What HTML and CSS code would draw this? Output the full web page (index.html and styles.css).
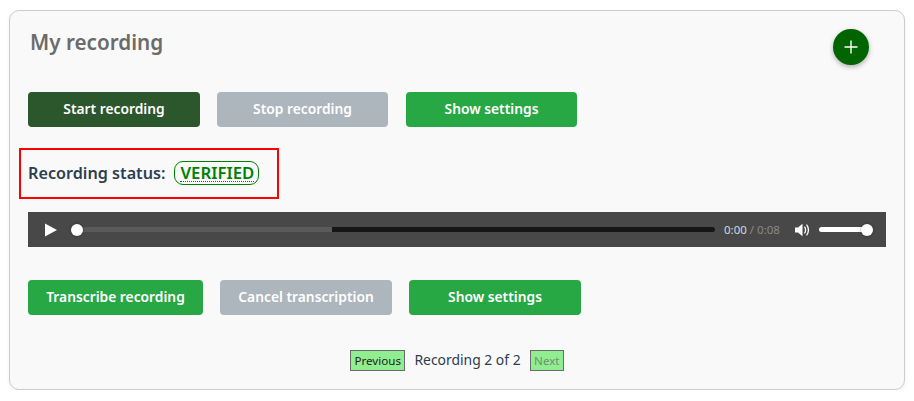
FILE: index.html
```html
<!DOCTYPE html>
<html lang="en">
<head>
<meta charset="utf-8">
<title>My recording</title>
<link rel="stylesheet" href="styles.css">
</head>
<body>
<main class="card">
  <header class="card-head">
    <h1 class="title">My recording</h1>
    <button class="fab" aria-label="Add"><svg width="14" height="14" viewBox="0 0 14 14"><path d="M7 .5v13M.5 7h13" stroke="#fff" stroke-width="1.4" fill="none"/></svg></button>
  </header>
  <div class="btn-row row-one">
    <button class="btn dark w-172">Start recording</button>
    <button class="btn grey w-171">Stop recording</button>
    <button class="btn green w-171">Show settings</button>
  </div>
  <div class="status-box">
    <span class="status-label">Recording status:</span>
    <span class="pill"><abbr class="pill-text">VERIFIED</abbr></span>
  </div>
  <div class="player">
    <svg class="play" width="14" height="14" viewBox="0 0 14 14"><path d="M1 0.5 13 7 1 13.5Z" fill="#fff"/></svg>
    <div class="track">
      <div class="buffered"></div>
      <div class="knob"></div>
    </div>
    <div class="time"><span class="cur">0:00</span><span class="dur"> / 0:08</span></div>
    <svg class="vol" width="15" height="14" viewBox="0 0 15 14"><path d="M0 4.5h3L7.5 .7v12.6L3 9.5H0Z" fill="#fff"/><path d="M9.5 3.6c1.4 1.8 1.4 5 0 6.8" stroke="#fff" stroke-width="1.3" fill="none"/><path d="M11.5 1.6c2.6 3 2.6 7.8 0 10.8" stroke="#fff" stroke-width="1.3" fill="none"/></svg>
    <div class="volume"><div class="knob vol-knob"></div></div>
  </div>
  <div class="btn-row row-two">
    <button class="btn green w-175">Transcribe recording</button>
    <button class="btn grey w-172">Cancel transcription</button>
    <button class="btn green w-172">Show settings</button>
  </div>
  <nav class="pager">
    <button class="page-btn">Previous</button>
    <span class="page-text">Recording 2 of 2</span>
    <button class="page-btn off">Next</button>
  </nav>
</main>
</body>
</html>
```
FILE: styles.css
```css
* { box-sizing: border-box; }
html, body { margin: 0; padding: 0; background: #fff; }
body { padding: 10px 9px 0; font-family: "Noto Sans", "Open Sans", sans-serif; color: #2c3e50; }
.card {
  width: 896px; height: 380px; background: #f9f9f9;
  border: 1px solid #ccc; border-radius: 10px;
  box-shadow: 0 2px 4px rgba(0,0,0,.06);
  padding: 0 18px;
}
.card-head { display: flex; justify-content: space-between; height: 81px; }
.title { margin: 17px 0 0 2px; font-size: 20.7px; line-height: 29px; font-weight: 600; color: #6b6b6b; }
.fab {
  width: 36px; height: 36px; margin: 18px 17px 0 0; padding: 0; border: 0; border-radius: 50%;
  background: #006400; box-shadow: 0 2px 5px rgba(0,0,0,.3);
  display: flex; align-items: center; justify-content: center;
}
.btn-row { display: flex; }
.btn {
  height: 35px; border: 0; border-radius: 4px; padding: 0 0 2px; color: #fff;
  font: 600 13.8px/33px "Noto Sans", sans-serif; text-align: center;
}
.row-one { gap: 17px; }
.row-one .green { margin-left: 1px; }
.row-two { gap: 17px; margin-top: 33px; }
.w-171 { width: 171px; }
.w-172 { width: 172px; }
.w-175 { width: 175px; }
.dark { background: #2c562c; }
.grey { background: #adb5bd; }
.green { background: #28a745; }
.status-box {
  width: 260px; height: 51px; margin: 21px 0 13px -9px; padding: 0 0 2px 7px;
  border: 2px solid #f00; display: flex; align-items: center; gap: 9px;
}
.status-label { font-size: 16.2px; font-weight: 600; color: #2c3e50; }
.pill { border: 1px solid #008000; border-radius: 9px; padding: 0 4px 0 5px; height: 24px; line-height: 22px; }
.pill-text { font-size: 16.8px; font-weight: 600; color: #008000; border-bottom: 1px dotted #008000; text-decoration: none; line-height: 17px; display: inline-block; }
.player {
  width: 858px; height: 35px; background: #484848; display: flex; align-items: center; padding: 0 0 0 16px;
}
.play { flex: none; }
.track { position: relative; width: 638px; height: 5px; margin-left: 19px; border-radius: 3px; background: #151515; }
.buffered { width: 255px; height: 5px; background: #5a5a5a; border-radius: 3px 0 0 3px; }
.knob { position: absolute; top: -3px; left: -6px; width: 12px; height: 12px; border-radius: 50%; background: #fff; box-shadow: 0 0 3px rgba(0,0,0,.4); }
.time { width: 57px; margin-left: 9px; font-size: 11.5px; white-space: nowrap; }
.cur { color: #cfd8e3; }
.dur { color: #8a8a8a; }
.vol { margin-left: 14px; flex: none; }
.volume { position: relative; width: 48px; height: 5px; margin-left: 9px; background: #fff; border-radius: 3px; }
.vol-knob { left: 42px; }
.pager { display: flex; justify-content: center; align-items: center; gap: 9px; margin-top: 35px; }
.page-btn {
  height: 21px; padding: 0 3.5px; background: #90ee90; border: 1px solid #6b6b6b;
  font: 11.6px/19px "Noto Sans", sans-serif; color: #222;
}
.off { color: #6f8f6f; }
.page-text { font-size: 13.9px; line-height: 19px; margin-top: -2px; color: #2c3e50; }
```
